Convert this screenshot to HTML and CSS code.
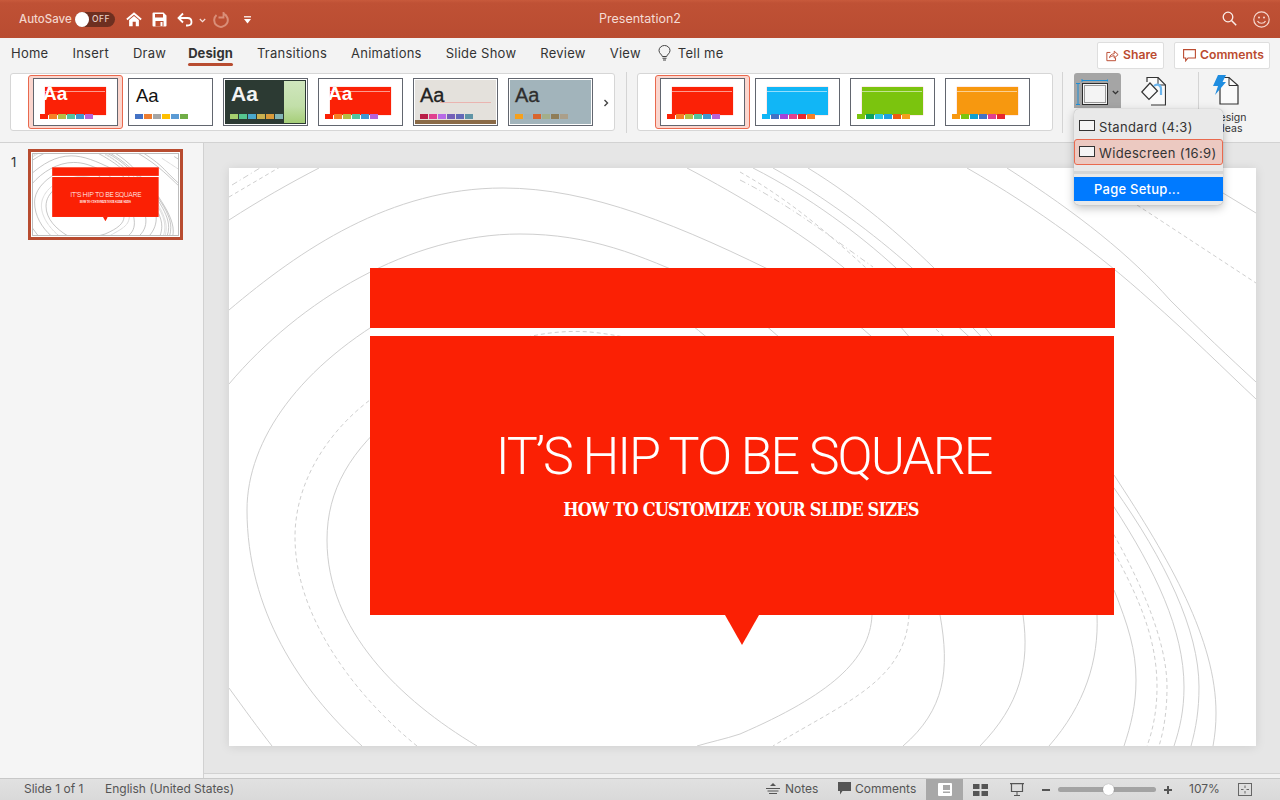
FILE: index.html
```html
<!DOCTYPE html>
<html lang="en">
<head>
<meta charset="utf-8">
<title>Presentation2</title>
<link rel="stylesheet" href="styles.css">
</head>
<body>
<svg class="defs" width="0" height="0" aria-hidden="true">
  <symbol id="contours" viewBox="229 168 1027 578">
    <g class="solid">
      <path d="M229 220C260 200 290 183 319 168"/>
      <path d="M229 310C300 250 390 188 503 188C590 188 680 225 790 280C850 310 900 360 930 400"/>
      <path d="M229 384C300 300 410 234 520 234C590 234 640 255 700 282C760 315 800 350 830 400"/>
      <path d="M362 746C300 690 247 610 247 510C247 440 300 365 400 310C450 285 520 270 600 280C650 290 680 315 710 340"/>
      <path d="M477 746C400 700 327 630 327 540C327 490 350 450 400 410"/>
      <path d="M229 688C245 710 258 728 272 746"/>
      <path d="M687 168C740 196 800 232 843 267C880 300 930 360 960 400"/>
      <path d="M753 168C810 197 860 235 895 267C960 330 1040 400 1114 475C1170 560 1216 640 1216 713C1216 725 1215 735 1213 746"/>
      <path d="M773 168C825 197 875 235 911 267C970 320 1040 400 1114 488C1165 560 1199 630 1199 687C1199 710 1196 728 1191 746"/>
      <path d="M808 168C860 200 900 235 933 267C990 325 1060 430 1114 507C1155 570 1184 630 1184 687C1184 710 1180 728 1174 746"/>
      <path d="M1114 590C1128 625 1136 650 1136 680C1136 705 1131 725 1124 746"/>
      <path d="M1097 615C1099 660 1085 705 1049 746"/>
      <path d="M1023 615C1030 665 1020 705 980 746"/>
      <path d="M940 615C950 670 945 710 903 746"/>
      <path d="M872 615C870 660 830 695 740 734C725 739 710 742 697 746"/>
      <path d="M967 168C1040 210 1100 255 1150 300C1190 335 1225 370 1256 399"/>
      <path d="M1007 168C1080 215 1130 255 1170 300C1200 330 1230 358 1256 382"/>
      <path d="M1223 193L1256 213"/>
    </g>
    <g class="dashed">
      <path d="M417 746C360 700 295 620 295 537C295 480 330 430 370 400"/>
      <path d="M229 197L280 167"/>
      <path d="M440 380C480 345 540 328 590 332C630 336 660 345 690 360"/>
      <path d="M740 172C790 200 830 235 865 267C930 320 1000 390 1060 450C1110 520 1167 620 1167 687C1167 710 1164 730 1159 746"/>
      <path d="M909 615C905 680 850 700 773 746"/>
      <path d="M1137 205L1256 283"/>
      <path d="M1114 552C1140 600 1157 640 1157 687C1157 710 1153 730 1147 746"/>
    </g>
    <g class="dashdot">
      <path d="M232 185L260 168"/>
      <path d="M740 180C790 205 835 240 873 267"/>
    </g>
  </symbol>
</svg>

<div class="app">
  <header class="titlebar">
    <span class="autosave">AutoSave</span>
    <span class="toggle"><i class="knob"></i><b>OFF</b></span>
    <svg class="qa qa-home" width="16" height="15" viewBox="0 0 18 16"><path d="M1 8L9 1.200L17 8" fill="none" stroke="#fff" stroke-width="2.200"/><path d="M3.500 8.500L9 4l5.500 4.500V15.500H11V10.500H7.500V15.500H3.500Z" fill="#fff"/></svg>
    <svg class="qa qa-save" width="15" height="15" viewBox="0 0 15 15"><path d="M1.500 .5H11.500L14.500 3.500V13.500a1 1 0 0 1-1 1H1.500a1 1 0 0 1-1-1V1.500a1 1 0 0 1 1-1Z" fill="#fff"/><rect x="3" y="2" width="8" height="3.500" fill="#bf5033"/><rect x="3.500" y="9" width="8" height="5.500" fill="#bf5033"/><rect x="8.500" y="10" width="2" height="4" fill="#fff"/></svg>
    <svg class="qa qa-undo" width="16" height="15" viewBox="0 0 16 15"><path d="M6 1.500L1.500 6L6 10.500M1.800 6H10.500C13 6 14.500 7.800 14.500 10C14.500 12 13 13.500 10.500 13.500H9" fill="none" stroke="#fff" stroke-width="1.800"/></svg>
    <svg class="qa qa-chev" width="7" height="5" viewBox="0 0 7 5"><path d="M.8 1L3.500 3.700L6.200 1" fill="none" stroke="#f5e0da" stroke-width="1.200"/></svg>
    <svg class="qa qa-redo" width="17" height="17" viewBox="0 0 17 17"><path d="M10.500 1V6.500H5.500" fill="none" stroke="#d98e78" stroke-width="1.800"/><path d="M10.500 2.800A6.800 6.800 0 1 1 3.500 4" fill="none" stroke="#d98e78" stroke-width="2"/></svg>
    <svg class="qa qa-more" width="7" height="8" viewBox="0 0 7 8"><rect y="0" width="7" height="1.500" fill="#f5e0da"/><path d="M0 3H7L3.500 7.500Z" fill="#fff"/></svg>
    <span class="doc-title">Presentation2</span>
    <svg class="qa qa-search" width="15" height="15" viewBox="0 0 15 15"><circle cx="6" cy="6" r="4.800" fill="none" stroke="#fbeee9" stroke-width="1.300"/><path d="M9.500 9.500L14.200 14.200" stroke="#fbeee9" stroke-width="1.500"/></svg>
    <svg class="qa qa-smile" width="17" height="17" viewBox="0 0 17 17"><circle cx="8.500" cy="8.500" r="7.700" fill="none" stroke="#f6d9d0" stroke-width="1.200"/><circle cx="6" cy="6.500" r="1" fill="#f6d9d0"/><circle cx="11" cy="6.500" r="1" fill="#f6d9d0"/><path d="M4.500 10C6 13 11 13 12.500 10" fill="none" stroke="#f6d9d0" stroke-width="1.200"/></svg>
  </header>

  <nav class="tabs">
    <span>Home</span><span>Insert</span><span>Draw</span><span class="tab-on">Design</span><span>Transitions</span><span>Animations</span><span>Slide Show</span><span>Review</span><span>View</span>
    <span class="tell">
      <svg width="13" height="17" viewBox="0 0 13 17"><path d="M4.300 11.500C4 9.500 1 8.500 1 5.500A5.500 5 0 0 1 12 5.500C12 8.500 9 9.500 8.700 11.500Z" fill="none" stroke="#444" stroke-width="1"/><path d="M4.500 13.200H8.500M5 15H8" stroke="#444" stroke-width="1.100"/></svg>
      Tell me
    </span>
    <span class="tab-actions">
      <button class="act act-share"><svg width="13" height="13" viewBox="0 0 15 13"><path d="M5 3H1V12.500H11V9" fill="none" stroke="#bb4b30" stroke-width="1.100"/><path d="M4 9C4.500 6 7 4.500 9.500 4.500V1.500L14 5.500L9.500 9.500V6.800C7.500 6.800 5.500 7.500 4 9Z" fill="none" stroke="#bb4b30" stroke-width="1.100"/></svg>Share</button>
      <button class="act act-comments"><svg width="13" height="13" viewBox="0 0 13 13"><path d="M.6.600H12.400V9H5L2.700 11.800V9H.6Z" fill="none" stroke="#bb4b30" stroke-width="1.100"/></svg>Comments</button>
    </span>
  </nav>

  <section class="ribbon">
    <div class="gallery gallery-a">
      <div class="tile on">
        <i class="art-red"></i><i class="art-line"></i><span class="aa aa-white">Aa</span>
        <svg class="swatch" width="74" height="5"><rect width="8" height="5" fill="#fb2106"/><rect x="9" width="8" height="5" fill="#f58025"/><rect x="18" width="8" height="5" fill="#b5bd45"/><rect x="27" width="8" height="5" fill="#52c3a0"/><rect x="36" width="8" height="5" fill="#3f97cf"/><rect x="45" width="8" height="5" fill="#b763d8"/></svg>
      </div>
      <div class="tile">
        <span class="aa aa-dark">Aa</span>
        <svg class="swatch" width="74" height="5"><rect width="8" height="5" fill="#4472c4"/><rect x="9" width="8" height="5" fill="#ed7d31"/><rect x="18" width="8" height="5" fill="#a5a5a5"/><rect x="27" width="8" height="5" fill="#ffc000"/><rect x="36" width="8" height="5" fill="#5b9bd5"/><rect x="45" width="8" height="5" fill="#70ad47"/></svg>
      </div>
      <div class="tile tile-forest">
        <i class="art-leaf"></i><span class="aa aa-forest">Aa</span>
        <svg class="swatch" width="74" height="5"><rect width="8" height="5" fill="#a6cf6e"/><rect x="9" width="8" height="5" fill="#56c58f"/><rect x="18" width="8" height="5" fill="#4aa8cc"/><rect x="27" width="8" height="5" fill="#c9b04f"/><rect x="36" width="8" height="5" fill="#d99a3b"/><rect x="45" width="8" height="5" fill="#82b4b5"/></svg>
      </div>
      <div class="tile">
        <i class="art-red"></i><i class="art-line"></i><span class="aa aa-white">Aa</span>
        <svg class="swatch" width="74" height="5"><rect width="8" height="5" fill="#fb2106"/><rect x="9" width="8" height="5" fill="#f58025"/><rect x="18" width="8" height="5" fill="#b5bd45"/><rect x="27" width="8" height="5" fill="#52c3a0"/><rect x="36" width="8" height="5" fill="#3f97cf"/><rect x="45" width="8" height="5" fill="#b763d8"/></svg>
      </div>
      <div class="tile tile-paper">
        <i class="art-rule"></i><i class="art-wood"></i><span class="aa aa-paper">Aa</span>
        <svg class="swatch" width="74" height="5"><rect width="8" height="5" fill="#b91d47"/><rect x="9" width="8" height="5" fill="#e0408f"/><rect x="18" width="8" height="5" fill="#b86ae6"/><rect x="27" width="8" height="5" fill="#7460b8"/><rect x="36" width="8" height="5" fill="#6468b8"/><rect x="45" width="8" height="5" fill="#5f94a6"/></svg>
      </div>
      <div class="tile tile-slate">
        <span class="aa aa-slate">Aa</span>
        <svg class="swatch" width="74" height="5"><rect width="8" height="5" fill="#f5a01e"/><rect x="9" width="8" height="5" fill="#9eb0b8"/><rect x="18" width="8" height="5" fill="#d9642d"/><rect x="27" width="8" height="5" fill="#a3ae8a"/><rect x="36" width="8" height="5" fill="#8f7d58"/><rect x="45" width="8" height="5" fill="#ab9f8a"/></svg>
      </div>
      <svg class="more-arrow" width="6" height="8" viewBox="0 0 6 8"><path d="M1.500 1L4.500 4L1.500 7" fill="none" stroke="#444" stroke-width="1.400"/></svg>
    </div>
    <i class="vr"></i>
    <div class="gallery gallery-b">
      <div class="tile on">
        <i class="art-var red"></i><i class="art-line"></i>
        <svg class="swatch" width="74" height="5"><rect width="8" height="5" fill="#fb2106"/><rect x="9" width="8" height="5" fill="#f58025"/><rect x="18" width="8" height="5" fill="#b5bd45"/><rect x="27" width="8" height="5" fill="#52c3a0"/><rect x="36" width="8" height="5" fill="#3f97cf"/><rect x="45" width="8" height="5" fill="#b763d8"/></svg>
      </div>
      <div class="tile">
        <i class="art-var blue"></i><i class="art-line"></i>
        <svg class="swatch" width="74" height="5"><rect width="8" height="5" fill="#10b6f5"/><rect x="9" width="8" height="5" fill="#4472c4"/><rect x="18" width="8" height="5" fill="#a344d8"/><rect x="27" width="8" height="5" fill="#e0408f"/><rect x="36" width="8" height="5" fill="#e8262e"/><rect x="45" width="8" height="5" fill="#f58025"/></svg>
      </div>
      <div class="tile">
        <i class="art-var green"></i><i class="art-line"></i>
        <svg class="swatch" width="74" height="5"><rect width="8" height="5" fill="#7ac40e"/><rect x="9" width="8" height="5" fill="#0ca060"/><rect x="18" width="8" height="5" fill="#2ec5e0"/><rect x="27" width="8" height="5" fill="#1f9fe0"/><rect x="36" width="8" height="5" fill="#ee5a10"/><rect x="45" width="8" height="5" fill="#f5a01e"/></svg>
      </div>
      <div class="tile">
        <i class="art-var orange"></i><i class="art-line"></i>
        <svg class="swatch" width="74" height="5"><rect width="8" height="5" fill="#f7980f"/><rect x="9" width="8" height="5" fill="#7ac40e"/><rect x="18" width="8" height="5" fill="#10a0d0"/><rect x="27" width="8" height="5" fill="#4472c4"/><rect x="36" width="8" height="5" fill="#e0408f"/><rect x="45" width="8" height="5" fill="#e8262e"/></svg>
      </div>
    </div>
    <i class="vr vr-b"></i>
    <div class="size-btn">
      <svg width="32" height="26" viewBox="0 0 32 26"><path d="M6 0V3M32 0V3M6 1.500H32" fill="none" stroke="#1e8fd6"/><path d="M0 4.500H4M0 25.500H4M2 4.500V25.500" fill="none" stroke="#1e8fd6"/><rect x="6.500" y="4.500" width="25" height="21" fill="#f4f4f4" stroke="#2c2c2c"/><rect x="8.500" y="6.500" width="21" height="17" fill="none" stroke="#9a9a9a"/></svg>
      <svg class="size-chev" width="7" height="5" viewBox="0 0 7 5"><path d="M.8 1L3.500 3.700L6.200 1" fill="none" stroke="#333" stroke-width="1.300"/></svg>
    </div>
    <svg class="format-bg" width="25" height="29" viewBox="0 0 25 29"><path d="M6 5V.5H17L24.500 8V28H10" fill="#fafafa" stroke="#333" stroke-width="1.200"/><path d="M17 .5V8H24.500" fill="none" stroke="#333"/><path d="M.8 15L9 6L16.500 14L8 22.500Z" fill="#fafafa" stroke="#333" stroke-width="1.200"/><path d="M13 9C16 6 20 8 20 12V18" fill="none" stroke="#6cb6ee" stroke-width="2.200"/></svg>
    <i class="vr vr-c"></i>
    <div class="ideas">
      <svg width="26" height="30" viewBox="0 0 26 30"><path d="M7 2.500H16L25 10.500V29H7Z" fill="#fafafa" stroke="#333" stroke-width="1.200"/><path d="M16 2.500V10.500H25" fill="none" stroke="#333"/><path d="M5 0H13L9.500 7H13L2 20L5 11H0Z" fill="#1f8de0"/></svg>
      <span>Design<br>Ideas</span>
    </div>
  </section>

  <main class="workspace">
    <aside class="sidebar">
      <span class="slide-no">1</span>
      <div class="thumb">
        <div class="thumb-view">
          <div class="slide slide-mini">
            <svg class="contours" viewBox="0 0 1027 578"><use href="#contours" width="1027" height="578"/></svg>
            <div class="band"></div>
            <div class="callout"><h1>IT’S HIP TO BE SQUARE</h1><p>HOW TO CUSTOMIZE YOUR SLIDE SIZES</p></div>
            <div class="tip"></div>
          </div>
        </div>
      </div>
    </aside>
    <div class="canvas">
      <div class="stage">
        <div class="slide">
          <svg class="contours" viewBox="0 0 1027 578"><use href="#contours" width="1027" height="578"/></svg>
          <div class="band"></div>
          <div class="callout"><h1>IT’S HIP TO BE SQUARE</h1><p>HOW TO CUSTOMIZE YOUR SLIDE SIZES</p></div>
          <div class="tip"></div>
        </div>
      </div>
      <div class="hscroll"></div>
    </div>
  </main>

  <footer class="status">
    <span class="st-a">Slide 1 of 1</span>
    <span class="st-b">English (United States)</span>
    <span class="st-right">
      <span class="st-item st-notes"><svg width="14" height="12" viewBox="0 0 14 12"><path d="M7 0L10 3H4Z" fill="#555"/><path d="M0 5.500H14M1.500 8H12.500M3 10.500H11" stroke="#555"/></svg>Notes</span>
      <span class="st-item st-comm"><svg width="13" height="13" viewBox="0 0 13 13"><path d="M0 0H13V9H4.500L2 12.500V9H0Z" fill="#555"/></svg>Comments</span>
      <span class="view-btn on"><svg width="14" height="13" viewBox="0 0 14 13"><rect width="14" height="13" rx="1" fill="#fff"/><rect x="5" y="2" width="7" height="5" fill="#a8a8a8"/><rect x="5" y="8.500" width="7" height="1.500" fill="#a8a8a8"/></svg></span>
      <span class="view-btn"><svg width="15" height="12" viewBox="0 0 15 12"><rect width="6.500" height="5" fill="#555"/><rect x="8.500" width="6.500" height="5" fill="#555"/><rect y="7" width="6.500" height="5" fill="#555"/><rect x="8.500" y="7" width="6.500" height="5" fill="#555"/></svg></span>
      <span class="view-btn"><svg width="14" height="13" viewBox="0 0 14 13"><path d="M0 .5H14" stroke="#555" stroke-width="1.500"/><path d="M1.500 1V8.500H12.500V1" fill="none" stroke="#555" stroke-width="1.200"/><path d="M7 9V12.500M4 12.500H10" stroke="#555"/></svg></span>
      <span class="zoom-sym zoom-minus"></span>
      <span class="slider"><i></i></span>
      <span class="zoom-sym zoom-plus"></span>
      <span class="pct">107%</span>
      <svg class="fit" width="14" height="13" viewBox="0 0 14 13"><rect x=".5" y=".5" width="13" height="12" fill="none" stroke="#666"/><path d="M7 2.500V5M7 8V10.500M3 6.500H5.500M8.500 6.500H11" stroke="#666"/></svg>
    </span>
  </footer>

  <div class="menu">
    <div class="menu-item"><i class="ratio"></i>Standard (4:3)</div>
    <div class="menu-item sel"><i class="ratio"></i>Widescreen (16:9)</div>
    <div class="menu-sep"></div>
    <div class="menu-item hot">Page Setup...</div>
  </div>
</div>
</body>
</html>
```
FILE: styles.css
```css
* { box-sizing: border-box; }
html, body { margin: 0; height: 100%; overflow: hidden; }
body { font-family: Inter, Roboto, "Liberation Sans", sans-serif; color: #333; background: #f3f3f3; }
.defs { position: absolute; }
i { display: block; font-style: normal; }

.app { position: relative; width: 1280px; height: 800px; display: flex; flex-direction: column; overflow: hidden; }

/* title bar */
.titlebar { height: 38px; flex: none; position: relative; display: flex; align-items: center; padding-left: 19px; background: linear-gradient(#c85a3c, #bf5135 8%, #b94c31); }
.autosave { font-size: 11.5px; font-weight: 500; color: #f3d5cb; width: 56px; }
.toggle { width: 40px; height: 15px; border-radius: 8px; background: #6d2f20; position: relative; display: block; margin-right: 11px; }
.toggle .knob { position: absolute; left: 0; top: 0; width: 14px; height: 15px; border-radius: 50%; background: #fff; }
.toggle b { position: absolute; left: 17px; top: 3px; font-size: 8.500px; line-height: 9px; font-weight: 500; color: #e9cfc6; letter-spacing: .5px; }
.qa { flex: none; display: block; }
.qa-home { margin-right: 10px; }
.qa-save { margin-right: 10px; }
.qa-undo { margin-right: 6px; }
.qa-chev { margin-right: 7px; margin-top: 2px; }
.qa-redo { margin-right: 14px; margin-top: 1px; }
.qa-more { margin-top: 1px; }
.doc-title { position: absolute; left: 0; right: 0; top: 11px; text-align: center; font-size: 12.500px; line-height: 16px; color: #f5dcd4; }
.qa-search { position: absolute; left: 1222px; top: 11px; }
.qa-smile { position: absolute; left: 1253px; top: 11px; }

/* tabs */
.tabs { height: 32px; flex: none; display: flex; align-items: flex-start; gap: 24px; padding: 7px 10px 0 11px; font-size: 13px; line-height: 16px; letter-spacing: .25px; color: #333; position: relative; }
.tab-on { font-weight: 700; position: relative; letter-spacing: .1px; margin-left: -2px; }
.tab-on::after { content: ""; position: absolute; left: 0; right: 0; top: 18px; height: 2.500px; border-radius: 2px; background: #b84c30; }
.tell { display: flex; align-items: center; gap: 7px; margin-left: -7px; margin-top: -3px; height: 22px; }
.tab-actions { margin-left: auto; display: flex; gap: 10px; margin-top: -3px; }
.act { height: 27px; border: 1px solid #dedede; border-radius: 2px; background: #fff; color: #bb4b30; font: 600 12.200px/15px Inter, Roboto, sans-serif; display: flex; align-items: center; gap: 4px; padding: 0 0 2px 8px; }
.act svg { flex: none; margin-top: 2px; }
.act-share { width: 67px; }
.act-comments { width: 96px; }

/* ribbon */
.ribbon { height: 73px; flex: none; display: flex; align-items: flex-start; padding: 3px 0 0 10px; border-bottom: 1px solid #d2d2d2; }
.gallery { height: 58px; background: #fff; border: 1px solid #d6d6d6; border-radius: 3px; display: flex; align-items: flex-start; gap: 10px; padding: 4px 0 0 22px; position: relative; z-index: 0; flex: none; }
.gallery-a { width: 605px; }
.gallery-b { width: 416px; }
.more-arrow { margin-top: 21px; }
.vr { width: 1px; height: 61px; background: #d4d4d4; margin: -1px 10px 0 11px; flex: none; }
.vr-b { margin: -1px 11px 0 9px; }
.vr-c { margin: -1px 0 0 32px; }
.tile { width: 85px; height: 48px; border: 1px solid #62666f; background: #fff; position: relative; flex: none; }
.tile.on::before { content: ""; position: absolute; z-index: -1; left: -6px; right: -6px; top: -4px; bottom: -4px; background: #fbd6ce; border: 1px solid #e9694e; border-radius: 3px; }
.swatch { position: absolute; left: 6px; top: 35px; display: block; }
.art-red, .art-var { position: absolute; left: 10.500px; top: 8px; width: 61px; height: 28px; background: #fb2106; box-shadow: 0 0 1px rgba(251,33,6,.5); }
.art-line { position: absolute; left: 11px; top: 12px; width: 60px; height: 1px; background: rgba(255,255,255,.55); }
.art-var.blue { background: #11b6f6; }
.art-var.green { background: #7bc40e; }
.art-var.orange { background: #f7980f; }
.aa { position: absolute; font-family: "Liberation Sans", sans-serif; line-height: 20px; }
.aa-white { left: 9px; top: 5px; font-size: 19px; font-weight: 700; color: #fff; }
.aa-dark { left: 7px; top: 7px; font-size: 18.500px; color: #111; }
.tile-forest { background: #2c3a33; border-width: 1px; box-shadow: inset 0 0 0 1px #fff; }
.art-leaf { position: absolute; right: 2px; top: 2px; bottom: 2px; width: 21px; background: linear-gradient(#cfe6bd, #c2dfa9 60%, #a6ce78); }
.aa-forest { left: 7px; top: 5px; font-size: 21px; font-weight: 700; color: #f4f4f4; }
.tile-paper { background: #e4e1dc; box-shadow: inset 0 0 0 1px #fff; }
.art-rule { position: absolute; left: 26px; right: 6px; top: 23px; height: 1px; background: #eab4b0; }
.art-wood { position: absolute; left: 1px; right: 1px; bottom: 1px; height: 4px; background: #8a6a46; }
.aa-paper { left: 6px; top: 6px; font-size: 20px; font-weight: 400; color: #222; -webkit-text-stroke: .3px #222; }
.tile-slate { background: #a2b4bb; box-shadow: inset 0 0 0 1px #fff; }
.aa-slate { left: 6px; top: 6px; font-size: 20px; color: #2e2e2e; -webkit-text-stroke: .3px #2e2e2e; }

.size-btn { width: 47px; height: 35px; background: #a5a5a5; border-radius: 3px 3px 0 0; display: flex; align-items: flex-start; padding: 6px 0 0 2px; flex: none; position: relative; }
.size-chev { position: absolute; left: 38px; top: 17px; }
.format-bg { margin: 4px 0 0 20px; flex: none; }
.ideas { margin-left: 13px; width: 36px; display: flex; flex-direction: column; align-items: flex-start; font-size: 10.500px; line-height: 11px; color: #333; text-align: center; flex: none; }
.ideas svg { margin: 2px 0 7px 1px; }
.ideas span { display: block; width: 34px; }

/* work area */
.workspace { flex: 1; display: flex; min-height: 0; }
.sidebar { width: 204px; flex: none; background: #f5f5f5; border-right: 1px solid #d1d1d1; position: relative; padding: 6px 0 0 28px; }
.slide-no { position: absolute; left: 11px; top: 11px; font-size: 13px; line-height: 16px; color: #333; }
.thumb { width: 155px; height: 91px; border: 3px solid #b84c30; background: #fff; padding: 1px; }
.thumb-view { width: 147px; height: 83px; overflow: hidden; position: relative; }
.thumb-view::after { content: ""; position: absolute; inset: 0; border: 1px solid #bdbdbd; }
.slide-mini { transform: scale(.1431); transform-origin: 0 0; box-shadow: none; }
.canvas { flex: 1; min-width: 0; display: flex; flex-direction: column; background: #e6e6e6; }
.stage { flex: 1; padding: 25px 0 0 25px; min-height: 0; }
.hscroll { height: 5px; background: #f0f0f0; border-top: 1px solid #d2d2d2; flex: none; }

.slide { width: 1027px; height: 578px; background: #fff; position: relative; box-shadow: 0 1px 10px rgba(0,0,0,.1); }
.contours { position: absolute; inset: 0; width: 100%; height: 100%; display: block; }
.contours { fill: none; stroke: #cfcfcf; stroke-width: 1; }
.slide-mini .contours { stroke: #b0b0b0; stroke-width: 5; }
.dashed { stroke-dasharray: 4 3; }
.dashdot { stroke-dasharray: 6 3 1 3; }
.band { position: absolute; left: 141px; top: 100px; width: 745px; height: 60px; background: #fb2004; }
.callout { position: absolute; left: 141px; top: 168px; width: 744px; height: 279px; background: #fb2004; color: #fff; text-align: center; padding: 88px 0 0 3px; }
.callout h1 { margin: 0 0 9px; font: 300 52px/66px Roboto, Lato, sans-serif; letter-spacing: -2.050px; }
.callout p { margin: 0; padding-right: 5px; font: 700 18px/22px "DejaVu Serif", serif; font-stretch: condensed; letter-spacing: -.8px; }
.tip { position: absolute; left: 496px; top: 447px; width: 34px; height: 30px; background: #fb2004; clip-path: polygon(0 0, 100% 0, 50% 100%); }

/* status bar */
.status { height: 22px; flex: none; background: linear-gradient(#e1e1e1, #d9d9d9); border-top: 1px solid #c8c8c8; display: flex; align-items: center; padding-bottom: 2px; font-size: 12px; line-height: 16px; color: #555; position: relative; }
.st-a { margin-left: 24px; width: 81px; }
.st-right { position: absolute; left: 0; top: 0; right: 0; bottom: 0; }
.st-item, .view-btn, .zoom-sym, .slider, .pct, .fit { position: absolute; top: 0; }
.st-item { display: flex; align-items: center; gap: 5px; height: 19px; }
.st-notes { left: 766px; }
.st-comm { left: 838px; gap: 4px; }
.view-btn { height: 21px; width: 37px; display: flex; align-items: center; justify-content: center; }
.view-btn.on { left: 926px; background: #a8a8a8; }
.view-btn:nth-of-type(4) { left: 962px; }
.view-btn:nth-of-type(5) { left: 998px; }
.zoom-minus { left: 1042px; top: 10px; width: 8px; height: 2px; background: #555; }
.zoom-plus { left: 1164px; top: 10px; width: 8px; height: 2px; background: #555; }
.zoom-plus::after { content: ""; position: absolute; left: 3px; top: -3px; width: 2px; height: 8px; background: #555; }
.slider { left: 1058px; top: 8px; width: 98px; height: 5px; border-radius: 3px; background: #a3a3a3; }
.slider i { position: absolute; left: 45px; top: -3px; width: 11px; height: 11px; border-radius: 50%; background: #fff; box-shadow: 0 0 1px rgba(0,0,0,.4); }
.pct { left: 1189px; top: 2px; }
.fit { left: 1238px; top: 4px; }

/* dropdown */
.menu { position: absolute; left: 1074px; top: 109px; width: 149px; height: 96px; background: #e9e9e9; border-radius: 5px; box-shadow: 0 3px 10px rgba(0,0,0,.25), 0 0 1px rgba(0,0,0,.3); padding-top: 4px; font-size: 13px; line-height: 16px; letter-spacing: .35px; color: #333; }
.menu-item { height: 26px; display: flex; align-items: center; gap: 4px; padding: 2px 0 0 5px; position: relative; }
.ratio { width: 16px; height: 11px; border: 1px solid #333; background: #f5f5f5; margin-top: -4px; }
.menu-item.sel { background: #ecc9c1; border: 1px solid #e9694e; border-radius: 3px; padding: 2px 0 0 4px; }
.menu-sep { height: 3px; background: #d6d6d6; margin-top: 6px; }
.menu-item.hot { background: #007aff; color: #fff; height: 24px; margin-top: 3px; padding: 0 0 0 20px; font-weight: 500; letter-spacing: .25px; }
```
